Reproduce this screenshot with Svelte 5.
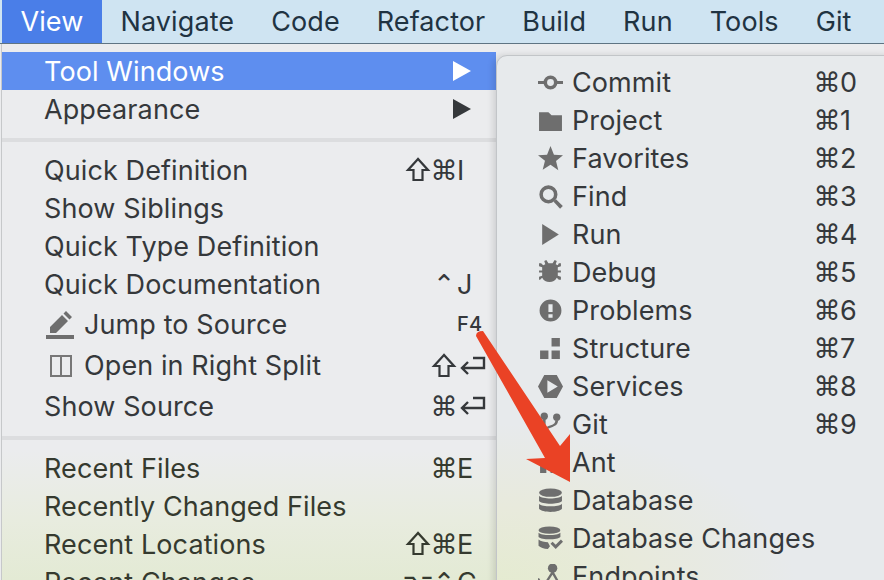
<script>
  const menus = ['Navigate', 'Code', 'Refactor', 'Build', 'Run', 'Tools', 'Git'];

  const groups = [
    [
      { label: 'Tool Windows', arrow: true, active: true },
      { label: 'Appearance', arrow: true }
    ],
    [
      { label: 'Quick Definition', keys: ['shift', '⌘', 'I'] },
      { label: 'Show Siblings' },
      { label: 'Quick Type Definition' },
      { label: 'Quick Documentation', keys: ['⌃', 'J'] },
      { label: 'Jump to Source', keys: ['F4'], icon: 'pencil', small: true, h: 'h42' },
      { label: 'Open in Right Split', keys: ['shift', 'return'], icon: 'split', h: 'h41' },
      { label: 'Show Source', keys: ['⌘', 'return'], h: 'h40' }
    ],
    [
      { label: 'Recent Files', keys: ['⌘', 'E'] },
      { label: 'Recently Changed Files' },
      { label: 'Recent Locations', keys: ['shift', '⌘', 'E'] },
      { label: 'Recent Changes', keys: ['⌥', '⌃', 'C'] }
    ]
  ];

  const tools = [
    { label: 'Commit', key: '0', icon: '<circle cx="12" cy="12" r="5" fill="none" stroke="#6e6e6e" stroke-width="3.400"/><path d="M0 10.500h6v3H0zM18 10.500h6v3h-6z"/>' },
    { label: 'Project', key: '1', icon: '<path d="M1 4h9l3 3h10v15H1z"/>' },
    { label: 'Favorites', key: '2', icon: '<path d="M12 0l3.300 8.300 8.700.6-6.700 5.600 2.200 8.700L12 18l-7.500 4.800 2.200-8.700L0 8.900l8.700-.6z"/>' },
    { label: 'Find', key: '3', icon: '<circle cx="10" cy="10" r="7" fill="none" stroke="#6e6e6e" stroke-width="3.400"/><path d="M15 17l2.300-2.300 6.500 6.500-2.600 2.600z"/>' },
    { label: 'Run', key: '4', icon: '<path d="M4 2l16 10L4 22z"/>' },
    { label: 'Debug', key: '5', icon: '<path d="M5 5l2-1-1-3 2-1 2 3h4l2-3 2 1-1 3 2 1 1-2h2v3l-3 1v3h3v2h-3v3l3 1v3h-2l-2-2a8 8 0 0 1-14 0l-2 2H1v-3l3-1v-3H1v-2h3V7L1 6V3h2z"/>' },
    { label: 'Problems', key: '6', icon: '<path fill-rule="evenodd" d="M12 1.500a10.500 10.500 0 1 0 0 21 10.500 10.500 0 0 0 0-21zM10 6h4v7.500h-4zM10 15.500h4V19h-4z"/>' },
    { label: 'Structure', key: '7', icon: '<path d="M13 2h8v8h-8zM2 14h8v8H2zM13 14h8v8h-8z"/>' },
    { label: 'Services', key: '8', icon: '<path fill-rule="evenodd" d="M6 1h12l6 11-6 11H6L0 12zM9 6v12l10-6z"/>' },
    { label: 'Git', key: '9', icon: '<circle cx="6" cy="4" r="3.500"/><circle cx="18" cy="5" r="3.500"/><circle cx="7" cy="20" r="3.500"/><path d="M4.700 6h2.600v11H4.700zM16.700 8h2.600c0 6-6 6-11 9l-1-2c5-3 9-2 9.400-7z"/>' },
    { label: 'Ant', icon: '<path d="M2 12h6v10H2zM12 14h9v8h-9z"/>' },
    { label: 'Database', icon: '<ellipse cx="12" cy="4.500" rx="11" ry="4"/><path d="M1 7.500c3 3.500 19 3.500 22 0v5c-3 3.500-19 3.500-22 0zM1 15c3 3.500 19 3.500 22 0v5c-3 4-19 4-22 0z"/>' },
    { label: 'Database Changes', icon: '<ellipse cx="11" cy="4" rx="10.500" ry="3.500"/><path d="M.5 6.500c3 3 18 3 21 0v4c-3 3-18 3-21 0zM.5 13c2 2 6 2.500 9 2.500l2 4-2 2.500c-4 0-7-1-9-3zM12 17l2-2 3 3 5-5 2 2-7 7z"/>' },
    { label: 'Endpoints', icon: '<circle cx="14" cy="4" r="4.500"/><path d="M0 14l5 8 9-14 8 14" fill="none" stroke="#6e6e6e" stroke-width="2.200"/>' }
  ];
</script>

{#snippet keycaps(keys)}
  {#each keys as k}
    <span class="cap" class:sym={'⌘⌃⌥'.includes(k)}>
      {#if k === 'shift'}
        <svg viewBox="0 0 26 26" fill="none" stroke="currentColor" stroke-width="2.200"><path d="M13 2L3 13h5.500v10h9V13H23z"/></svg>
      {:else if k === 'return'}
        <svg viewBox="0 0 26 26" fill="none" stroke="currentColor" stroke-width="2.400"><path d="M16 5h11v10H5M11 9l-6 6 6 6"/></svg>
      {:else}
        {k}
      {/if}
    </span>
  {/each}
{/snippet}

<div class="screen">
  <nav class="menubar">
    <span class="menu-title open">View</span>
    {#each menus as m}
      <span class="menu-title">{m}</span>
    {/each}
  </nav>

  <div class="dropdown">
    {#each groups as group, g}
      {#if g > 0}<div class="sep"></div>{/if}
      {#each group as item}
        <div class="item {item.h ?? ''}" class:active={item.active} class:low={g === 2}>
          {#if item.icon === 'pencil'}
            <svg class="lead" viewBox="0 0 28 30" fill="#6e6e6e"><path d="M6 18L18 6l6 6-12 12H6zM19.500 4.500L22 2l6 6-2.500 2.500zM2 26h28v4H2z"/></svg>
          {:else if item.icon === 'split'}
            <svg class="lead" viewBox="0 0 28 30" fill="none" stroke="#777" stroke-width="2"><path d="M7 5h20v20H7zM17 5v20"/></svg>
          {/if}
          <span class="label">{item.label}</span>
          {#if item.arrow}
            <span class="arrow"></span>
          {:else if item.keys}
            <span class="keys" class:small={item.small}>{@render keycaps(item.keys)}</span>
          {/if}
        </div>
      {/each}
    {/each}
  </div>

  <div class="submenu">
    {#each tools as tool}
      <div class="tool">
        <svg class="tool-icon" viewBox="0 0 24 24" fill="#6e6e6e">{@html tool.icon}</svg>
        <span class="label">{tool.label}</span>
        {#if tool.key}<span class="keys">{@render keycaps(['⌘', tool.key])}</span>{/if}
      </div>
    {/each}
  </div>

  <!-- annotation drawn over the screenshot -->
  <svg class="annotation" viewBox="0 0 884 580">
    <path d="M476 336Q476 331 483 331L560 446 570 434 570 482 526 459 545 458z" fill="#ea4225"/>
  </svg>
</div>

<style>
  :global(body) {
    margin: 0;
    background: #ebecee;
  }

  .screen {
    position: relative;
    width: 884px;
    height: 580px;
    overflow: hidden;
    font-family: Inter, "Noto Sans", sans-serif;
    font-size: 27px;
    letter-spacing: .1px;
    color: #35383b;
  }

  .menubar {
    display: flex;
    height: 44px;
    padding-left: 2px;
    background: #cfe4f2;
    border-bottom: 1px solid #5f7483;
    box-sizing: border-box;
  }
  .menu-title {
    display: flex;
    align-items: center;
    padding: 0 18.500px;
    color: #1f3342;
  }
  .menu-title.open {
    width: 100px;
    box-sizing: border-box;
    background: #4a7ee8;
    color: #fff;
  }

  .dropdown {
    height: 536px;
    margin-left: 1px;
    padding-top: 8px;
    box-sizing: border-box;
    background: linear-gradient(to top, #e3ead4 0, #e8ecdf 60px, #ebecee 130px);
    border-left: 1px solid #c6c8ca;
  }
  .item {
    display: flex;
    align-items: center;
    height: 38px;
    padding: 0 13px 0 42px;
    width: 494px;
    box-sizing: border-box;
  }
  .item.h42 { height: 42px; }
  .item.h41 { height: 41px; }
  .item.h40 { height: 40px; }
  .item.active {
    background: #5e8eef;
    color: #fff;
  }
  .item.low {
    color: #353a2f;
  }
  .lead {
    width: 28px;
    height: 30px;
    margin-right: 12px;
    flex-shrink: 0;
    overflow: visible;
  }
  .label {
    white-space: nowrap;
  }
  .keys {
    display: flex;
    margin-left: auto;
    font-size: 27px;
  }
  .cap {
    display: flex;
    align-items: center;
    width: 26px;
    height: 26px;
  }
  .cap.sym {
    justify-content: center;
    font-family: "DejaVu Sans", sans-serif;
  }
  .cap svg {
    width: 26px;
    height: 26px;
    overflow: visible;
  }
  .keys.small {
    font-size: 20px;
    font-weight: 500;
  }
  .arrow {
    margin-left: auto;
    margin-right: 12px;
    border-left: 18px solid currentColor;
    border-top: 10px solid transparent;
    border-bottom: 10px solid transparent;
  }
  .sep {
    height: 4px;
    margin: 10px 0 9px;
    width: 494px;
    background: #dcdddf;
  }

  .submenu {
    position: absolute;
    left: 496px;
    top: 55px;
    width: 400px;
    height: 540px;
    padding-top: 7px;
    box-sizing: border-box;
    background: radial-gradient(ellipse 300px 170px at 0 100%, #e4ebcf 0, #e8eadc 50%, rgba(231, 234, 236, 0) 100%), #e7eaec;
    border: 1px solid #c2c5c8;
    border-radius: 11px;
    box-shadow: -3px 0 6px rgba(0, 0, 0, .12);
  }
  .tool {
    display: flex;
    align-items: center;
    height: 38px;
    width: 369px;
    padding-left: 41px;
    box-sizing: border-box;
  }
  .tool-icon {
    width: 25px;
    height: 25px;
    margin-right: 9px;
    flex-shrink: 0;
  }

  .annotation {
    position: absolute;
    inset: 0;
    width: 884px;
    height: 580px;
    pointer-events: none;
  }
</style>
